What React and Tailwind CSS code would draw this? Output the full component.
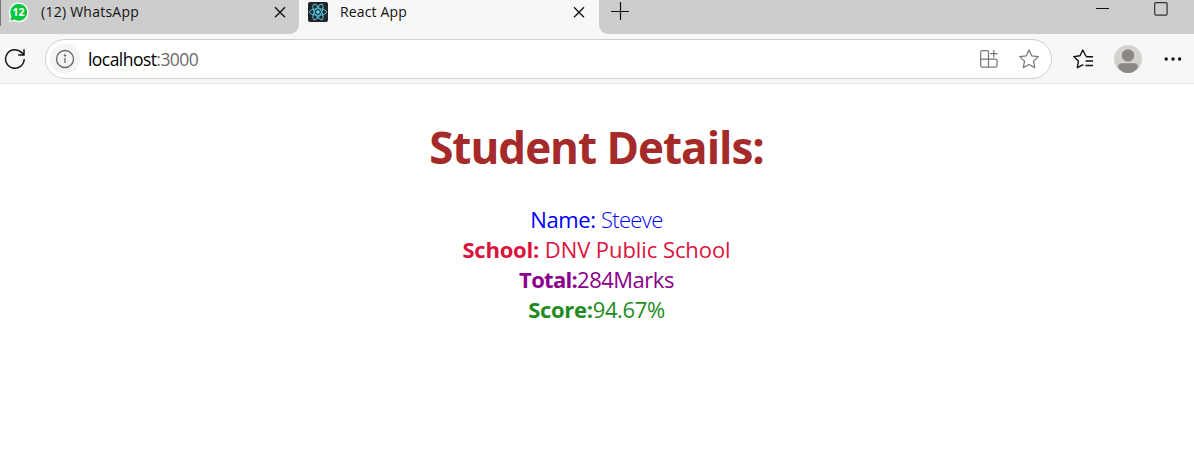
function Close() {
  return (
    <svg className="shrink-0" width="12" height="12" viewBox="0 0 12 12" fill="none" stroke="#111" strokeWidth="1.3">
      <path d="M1 1.2 11 11.2M11 1.2 1 11.2" />
    </svg>
  );
}

function WhatsAppIcon() {
  return (
    <svg className="shrink-0" width="21" height="22" viewBox="0 0 21 22">
      <path d="M.7 21.3 1.8 16A10 10 0 1 1 6 20.3Z" fill="#f2f5f2" />
      <path d="M2.3 19.6 3.5 15.6A8.4 8.4 0 1 1 6.4 18.5Z" fill="#0ac63f" />
      <text x="10.5" y="15" textAnchor="middle" fontSize="10.5" fontWeight="700" fill="#fff" fontFamily="Open Sans, sans-serif">12</text>
    </svg>
  );
}

function ReactIcon() {
  return (
    <svg className="shrink-0" width="20" height="20" viewBox="0 0 20 20">
      <rect width="20" height="20" rx="2" fill="#222527" />
      <g fill="none" stroke="#53c1de" strokeWidth="1">
        <ellipse cx="10" cy="10" rx="8.6" ry="3.3" />
        <ellipse cx="10" cy="10" rx="8.6" ry="3.3" transform="rotate(60 10 10)" />
        <ellipse cx="10" cy="10" rx="8.6" ry="3.3" transform="rotate(120 10 10)" />
      </g>
      <circle cx="10" cy="10" r="1.8" fill="#61dafb" />
    </svg>
  );
}

function TabStrip() {
  return (
    <div className="flex h-[34px] bg-[#f7f7f7] text-[14px] text-[#111]">
      <div className="flex h-full w-[299px] rounded-br-[9px] bg-[#cdcdcd]">
        <div className="h-[26px] w-px bg-[#777]" />
        <div className="ml-[7px] mt-[1px]"><WhatsAppIcon /></div>
        <span className="ml-[12px] mt-[2px] w-[233px] leading-[20px] tracking-[0.25px]">(12) WhatsApp</span>
        <div className="mt-[6px]"><Close /></div>
      </div>
      <div className="flex h-full w-[300px]">
        <div className="ml-[9px] mt-[2px]"><ReactIcon /></div>
        <span className="ml-[12px] mt-[2px] w-[233px] leading-[20px] tracking-[0.15px]">React App</span>
        <div className="mt-[6px]"><Close /></div>
      </div>
      <div className="flex h-full flex-1 justify-between rounded-bl-[9px] bg-[#cdcdcd]">
        <svg className="ml-[12px] mt-[2px]" width="18" height="18" viewBox="0 0 18 18" stroke="#111" strokeWidth="1.2">
          <path d="M9.5 0V18M0 9.5H18" />
        </svg>
        <div className="flex">
          <svg className="mr-[44px]" width="14" height="17" stroke="#111"><path d="M0 8.5H13" /></svg>
          <svg className="mr-[26px] mt-[2px]" width="14" height="14" fill="none" stroke="#333" strokeWidth="1.2">
            <rect x=".7" y=".7" width="12.4" height="12.4" rx="1" />
          </svg>
        </div>
      </div>
    </div>
  );
}

function Toolbar() {
  return (
    <div className="flex h-[50px] items-center border-b border-[#e7e7e7] bg-[#f7f7f7]">
      <svg className="ml-[4px] shrink-0" width="22" height="22" viewBox="0 0 22 22" fill="none" stroke="#151515" strokeWidth="1.5">
        <path d="M20.2 11A9.3 9.3 0 1 1 17.5 4.4L20 7M20 1.2V7H14.2" />
      </svg>
      <div className="ml-[19px] flex h-[40px] w-[1007px] shrink-0 items-center rounded-full border border-[#cfcfcf] bg-white">
        <div className="ml-[4px] flex h-[30px] w-[30px] items-center justify-center rounded-full bg-[#f4f4f4]">
          <svg width="20" height="20" viewBox="0 0 20 20" fill="none" stroke="#666" strokeWidth="1.3">
            <circle cx="10" cy="10" r="8.5" />
            <path d="M10 9V14" />
            <circle cx="10" cy="6.5" r=".5" fill="#666" />
          </svg>
        </div>
        <span className="ml-[8px] flex-1 text-[17.5px] leading-[24px] tracking-[-0.55px] text-black">localhost<span className="text-[#6b6b6b]">:3000</span></span>
        <svg className="mr-[20px]" width="20" height="20" viewBox="0 0 20 20" fill="none" stroke="#777" strokeWidth="1.25">
          <path d="M9.5 10V3.2Q9.5 1.7 8 1.7H3.2Q1.7 1.7 1.7 3.2V16.6Q1.7 18.2 3.2 18.2H16.5Q18 18.2 18 16.7V11.5Q18 10 16.5 10H1.7M9.5 10V18.2M14.8 1V8.5M11 4.7H18.7" />
        </svg>
        <svg className="mr-[12px]" width="20" height="20" viewBox="0 0 20 20" fill="none" stroke="#777" strokeWidth="1.25" strokeLinejoin="round">
          <path d="M10 .9 12.7 6.8 19.3 7.6 14.5 12.1 15.7 18.7 10 15.5 4.3 18.7 5.5 12.1.7 7.6 7.3 6.8Z" />
        </svg>
      </div>
      <svg className="ml-[21px] shrink-0" width="21" height="20" viewBox="0 0 21 20" fill="none" stroke="#111" strokeWidth="1.4" strokeLinejoin="round">
        <path d="M13.5 6.8 12.5 6.5 9.8 1 7 6.8.8 7.6 5.4 12.1 4.3 18.7 10.3 15.6M13 7.7H20M12.5 12H20M12.5 16.5H20" />
      </svg>
      <svg className="ml-[20px] shrink-0" width="28" height="28" viewBox="0 0 28 28">
        <circle cx="14" cy="14" r="14" fill="#d3d2ce" />
        <circle cx="14" cy="10.5" r="6.2" fill="#8b8783" />
        <path d="M4 22.8Q4 18.2 7.5 18.2H20.5Q24 18.2 24 22.8Q20 28 14 28 8 28 4 22.8Z" fill="#8b8783" />
      </svg>
      <svg className="ml-[22px] shrink-0" width="18" height="6" fill="#151515">
        <circle cx="2.2" cy="3" r="1.7" /><circle cx="9" cy="3" r="1.7" /><circle cx="15.6" cy="3" r="1.7" />
      </svg>
    </div>
  );
}

export default function App() {
  return (
    <div className="h-[449px] w-[1194px] overflow-hidden bg-white font-['Open_Sans',sans-serif]">
      <TabStrip />
      <Toolbar />
      <main className="flex flex-col items-center pr-px pt-[33px]">
        <h1 className="whitespace-nowrap text-[44px] font-bold leading-[60px] tracking-[-1.02px] text-[#a52a2a]">Student Details:</h1>
        <div className="mt-[27px] flex flex-col items-center whitespace-nowrap text-[22px] leading-[30px]">
          <p className="tracking-[-0.4px] text-[#0000ff]">Name: <span className="font-light tracking-[-0.65px]">Steeve</span></p>
          <p className="tracking-[-0.07px] text-[#dc143c]"><b className="tracking-[-0.2px]">School:</b> DNV Public School</p>
          <p className="tracking-[-0.5px] text-[#8b008b]"><b className="tracking-[-0.7px]">Total:</b>284Marks</p>
          <p className="tracking-[-0.35px] text-[#228b22]"><b className="tracking-[-0.3px]">Score:</b>94.67%</p>
        </div>
      </main>
    </div>
  );
}
